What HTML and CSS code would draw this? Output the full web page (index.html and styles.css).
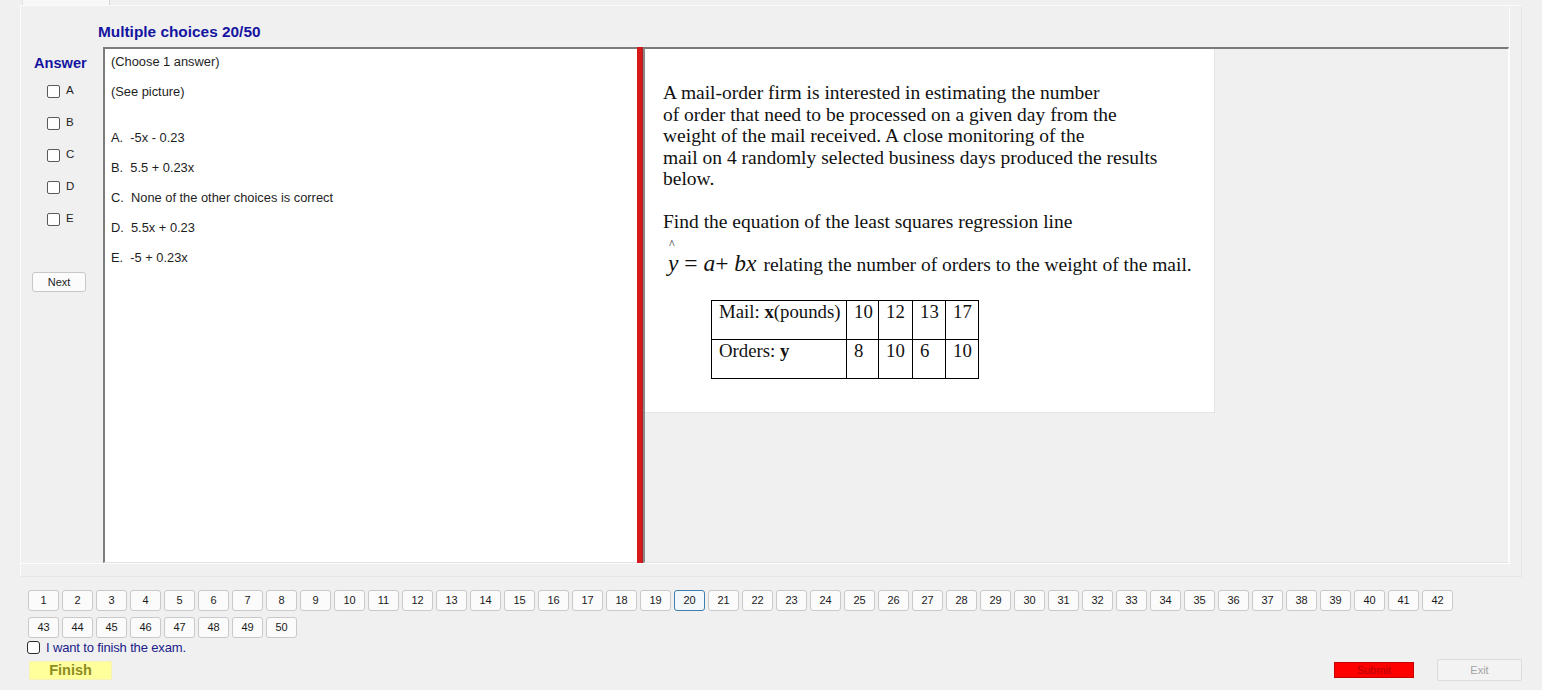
FILE: index.html
```html
<!DOCTYPE html>
<html>
<head>
<meta charset="utf-8">
<title>Exam</title>
<link rel="stylesheet" href="styles.css">
</head>
<body>
<div class="tabstrip"><div class="tab"></div></div>
<div class="tabpage">
  <div class="group">
    <div class="title">Multiple choices 20/50</div>
    <div class="main">
      <div class="answer-col">
        <div class="answer-label">Answer</div>
        <label class="opt"><span class="cb"></span><span class="opt-text">A</span></label>
        <label class="opt"><span class="cb"></span><span class="opt-text">B</span></label>
        <label class="opt"><span class="cb"></span><span class="opt-text">C</span></label>
        <label class="opt"><span class="cb"></span><span class="opt-text">D</span></label>
        <label class="opt"><span class="cb"></span><span class="opt-text">E</span></label>
        <div class="next-btn">Next</div>
      </div>
      <div class="question">
        <div class="qline">(Choose 1 answer)</div>
        <div class="qline">(See picture)</div>
        <div class="qline qgap">A.&nbsp; -5x - 0.23</div>
        <div class="qline">B.&nbsp; 5.5 + 0.23x</div>
        <div class="qline">C.&nbsp; None of the other choices is correct</div>
        <div class="qline">D.&nbsp; 5.5x + 0.23</div>
        <div class="qline">E.&nbsp; -5 + 0.23x</div>
      </div>
      <div class="splitter"></div>
      <div class="picpanel">
        <div class="picture">
          <p class="para">A mail-order firm is interested in estimating the number<br>of order that need to be processed on a given day from the<br>weight of the mail received. A close monitoring of the<br>mail on 4 randomly selected business days produced the results<br>below.</p>
          <p class="para">Find the equation of the least squares regression line</p>
          <div class="hat">^</div>
          <div class="formula-line"><span class="formula"><i>y</i> = <i>a</i>+ <i>bx</i></span> relating the number of orders to the weight of the mail.</div>
          <table class="data">
            <colgroup><col class="c0"><col class="c1"><col class="c2"><col class="c3"><col class="c4"></colgroup>
            <tr><td>Mail: <b>x</b>(pounds)</td><td>10</td><td>12</td><td>13</td><td>17</td></tr>
            <tr><td>Orders: <b>y</b></td><td>8</td><td>10</td><td>6</td><td>10</td></tr>
          </table>
        </div>
      </div>
    </div>
  </div>
</div>
<div class="nav">
  <div class="nb">1</div><div class="nb">2</div><div class="nb">3</div><div class="nb">4</div><div class="nb">5</div><div class="nb">6</div><div class="nb">7</div><div class="nb">8</div><div class="nb">9</div><div class="nb">10</div>
  <div class="nb">11</div><div class="nb">12</div><div class="nb">13</div><div class="nb">14</div><div class="nb">15</div><div class="nb">16</div><div class="nb">17</div><div class="nb">18</div><div class="nb">19</div><div class="nb current">20</div>
  <div class="nb">21</div><div class="nb">22</div><div class="nb">23</div><div class="nb">24</div><div class="nb">25</div><div class="nb">26</div><div class="nb">27</div><div class="nb">28</div><div class="nb">29</div><div class="nb">30</div>
  <div class="nb">31</div><div class="nb">32</div><div class="nb">33</div><div class="nb">34</div><div class="nb">35</div><div class="nb">36</div><div class="nb">37</div><div class="nb">38</div><div class="nb">39</div><div class="nb">40</div>
  <div class="nb">41</div><div class="nb">42</div><div class="nb">43</div><div class="nb">44</div><div class="nb">45</div><div class="nb">46</div><div class="nb">47</div><div class="nb">48</div><div class="nb">49</div><div class="nb">50</div>
</div>
<label class="finish-check"><span class="cb cb-dark"></span><span class="finish-text">I want to finish the exam.</span></label>
<div class="bottom">
  <div class="finish-btn">Finish</div>
  <div class="submit-btn">Submit</div>
  <div class="exit-btn">Exit</div>
</div>
</body>
</html>
```
FILE: styles.css
```css
* { box-sizing: border-box; }
html, body { margin: 0; padding: 0; }
body {
  width: 1542px;
  height: 690px;
  overflow: hidden;
  background: #f0f0f0;
  font-family: "Liberation Sans", Arial, sans-serif;
  color: #1a1a1a;
}
.tabstrip { height: 5px; padding-left: 22px; }
.tab {
  width: 88px;
  height: 5px;
  background: #f8f8f8;
  border-left: 1px solid #e2e2e2;
  border-right: 1px solid #d6d6d6;
}
.tabpage {
  margin-left: 20px;
  width: 1502px;
  height: 572px;
  border: 1px solid #fbfbfb;
  border-right-color: #e6e6e6;
  border-bottom-color: #e6e6e6;
  background: #f0f0f0;
}
.group {
  width: 1489px;
  height: 557px;
  margin-top: 1px;
  border-right: 1px solid #fdfdfd;
  border-bottom: 1px solid #fdfdfd;
  display: flex;
  flex-direction: column;
}
.title {
  height: 40px;
  padding: 17px 0 0 77px;
  font-size: 15.4px;
  line-height: 16px;
  font-weight: bold;
  color: #1414a0;
}
.main {
  display: flex;
  height: 516px;
}
.answer-col {
  width: 82px;
  flex: none;
  display: flex;
  flex-direction: column;
  align-items: flex-start;
}
.answer-label {
  margin: 8px 0 4px 13px;
  font-size: 14.6px;
  line-height: 16px;
  font-weight: bold;
  color: #1414a0;
}
.opt {
  height: 32px;
  display: flex;
  align-items: center;
  padding-left: 26px;
}
.cb {
  width: 13px;
  height: 13px;
  flex: none;
  border: 1px solid #5a5a5a;
  border-radius: 2px;
  background: #fff;
}
.opt-text {
  margin-left: 6px;
  font-size: 11.5px;
  color: #222;
  margin-top: -2px;
}
.next-btn {
  margin: 37px 0 0 11px;
  width: 54px;
  height: 20px;
  border: 1px solid #c8c8c8;
  border-radius: 3px;
  background: #fbfbfb;
  font-size: 11px;
  line-height: 18px;
  text-align: center;
  color: #222;
}
.question {
  width: 534px;
  flex: none;
  background: #fff;
  border-left: 2px solid #7c7c7c;
  border-top: 2px solid #7c7c7c;
  border-bottom: 1px solid #e2e2e2;
  padding: 6px 0 0 6px;
}
.qline {
  font-size: 12.85px;
  line-height: 14px;
  margin-bottom: 16px;
  color: #1e1e1e;
}
.qgap { margin-top: 32px; }
.splitter {
  width: 6px;
  flex: none;
  background: #d41a1a;
  border-right: 1px solid #b02020;
}
.picpanel {
  flex: 1;
  border-top: 2px solid #7a7a7a;
  border-left: 2px solid #8a8a8a;
  border-right: 1px solid #fdfdfd;
  border-bottom: 1px solid #e4e4e4;
  background: #f0f0f0;
  display: flex;
  align-items: flex-start;
}
.picture {
  width: 570px;
  height: 364px;
  background: #fff;
  border-right: 1px solid #e4e4e4;
  border-bottom: 1px solid #e4e4e4;
  padding: 33px 0 0 18px;
  font-family: "Liberation Serif", "Times New Roman", serif;
  font-size: 19.5px;
  line-height: 21.5px;
  color: #111;
}
.para { margin: 0 0 21.5px 0; }
.hat {
  margin: -16px 0 0 6px;
  font-size: 12px;
  line-height: 12px;
  height: 12px;
}
.formula-line {
  margin-top: 0;
  line-height: 26px;
  white-space: nowrap;
}
.formula {
  font-size: 23.5px;
  margin: 0 2px 0 5px;
}
.data {
  margin: 22px 0 0 48px;
  border-collapse: collapse;
  table-layout: fixed;
  width: 267px;
  font-size: 18.8px;
  line-height: 20px;
}
.data td {
  border: 1px solid #000;
  height: 39px;
  vertical-align: top;
  padding: 1px 0 0 7px;
  white-space: nowrap;
}
.c0 { width: 135px; }
.c1 { width: 32px; }
.c2 { width: 34px; }
.c3 { width: 33px; }
.c4 { width: 33px; }
.nav {
  width: 1430px;
  margin: 13px 0 0 28px;
  display: flex;
  flex-wrap: wrap;
  column-gap: 3px;
  row-gap: 6px;
}
.nb {
  width: 31px;
  height: 21px;
  border: 1px solid #c9c9c9;
  border-radius: 3px;
  background: #fbfbfb;
  font-size: 11px;
  line-height: 19px;
  text-align: center;
  color: #1a1a1a;
}
.nb.current {
  border-color: #3f7fae;
  background: #f3f8fc;
}
.finish-check {
  display: flex;
  align-items: center;
  margin: 3px 0 0 27px;
  height: 13px;
}
.cb-dark { border-color: #2a2a2a; border-radius: 3px; }
.finish-text {
  margin-left: 6px;
  font-size: 13px;
  color: #20208a;
  letter-spacing: -0.15px;
}
.bottom {
  display: flex;
  align-items: center;
  height: 22px;
  margin-top: 5px;
  padding: 0 20px 0 29px;
}
.finish-btn {
  width: 83px;
  height: 19px;
  background: #ffff9c;
  border: 1px solid #f4f4b8;
  font-size: 14.5px;
  font-weight: bold;
  line-height: 17px;
  text-align: center;
  color: #8c8c1e;
}
.submit-btn {
  margin-left: auto;
  width: 80px;
  height: 16px;
  background: #fe0000;
  border: 1px solid #c80000;
  font-size: 11px;
  line-height: 14px;
  text-align: center;
  color: #b40000;
}
.exit-btn {
  margin-left: 23px;
  width: 85px;
  height: 22px;
  background: #f3f3f3;
  border: 1px solid #dcdcdc;
  border-radius: 2px;
  font-size: 11px;
  line-height: 20px;
  text-align: center;
  color: #a3a3a3;
}
```
